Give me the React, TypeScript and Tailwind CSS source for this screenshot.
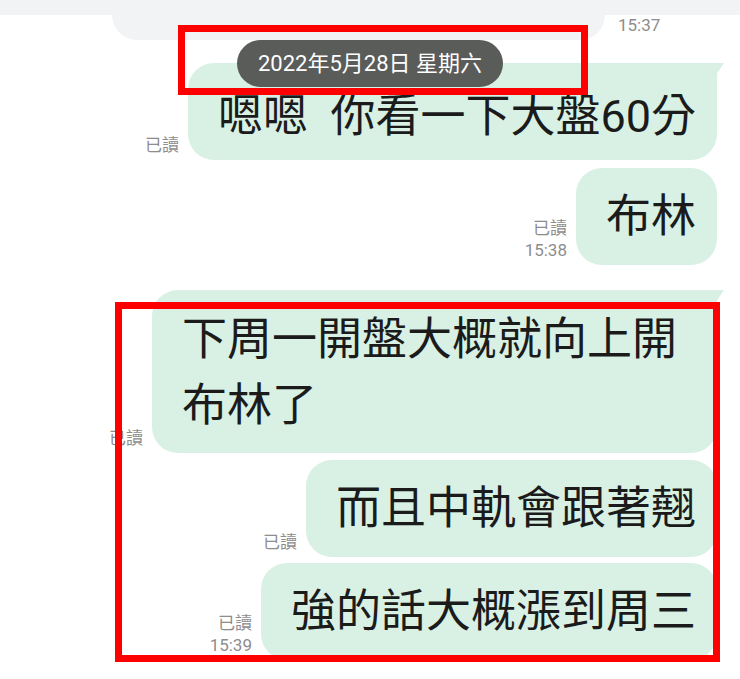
import type { ReactNode } from "react";

const FONT = "font-['Roboto','Noto_Sans_CJK_TC',sans-serif]";

function Tail() {
  return (
    <svg viewBox="0 0 8 12" className="absolute -right-[7px] top-0 w-[8px] h-[12px]">
      <path d="M0 0H8L0 12Z" fill="#d8f1e4" />
    </svg>
  );
}

function Meta({ time }: { time?: string }) {
  return (
    <div className="flex flex-col items-end pb-[4px] text-[17px] leading-[22px] text-[#8d8d8d]">
      <span>已讀</span>
      {time && <span>{time}</span>}
    </div>
  );
}

function Sent({
  children,
  time,
  tail,
  className,
}: {
  children: ReactNode;
  time?: string;
  tail?: boolean;
  className: string;
}) {
  return (
    <div className={`flex justify-end items-end gap-[9px] pr-[23px] ${className}`}>
      <Meta time={time} />
      <div
        className={`relative max-w-[565px] bg-[#d8f1e4] pl-[30px] pr-[21px] text-[45px] leading-[66px] text-[#1b1b1b] whitespace-pre-wrap rounded-[26px] ${
          tail ? "rounded-tr-none" : ""
        }`}
      >
        {tail && <Tail />}
        {children}
      </div>
    </div>
  );
}

export default function App() {
  return (
    <div className={`relative w-[740px] h-[679px] overflow-hidden bg-white ${FONT}`}>
      <div className="h-[15px] bg-[#f2f3f5]" />
      <div className="flex items-start h-[25px]">
        <div className="ml-[112px] w-[493px] h-[25px] bg-[#f2f3f5] rounded-b-[26px]" />
        <span className="ml-[13px] -mt-[1px] text-[17px] leading-[22px] text-[#8d8d8d]">15:37</span>
      </div>

      <Sent tail className="mt-[23px]">
        <div className="pt-[21px] pb-[10px]">{"嗯嗯  你看一下大盤60分"}</div>
      </Sent>
      <Sent time="15:38" className="mt-[8px]">
        <div className="pt-[16px] pb-[15px]">布林</div>
      </Sent>
      <Sent tail className="mt-[25px]">
        <div className="pt-[17px] pb-[14px]">下周一開盤大概就向上開布林了</div>
      </Sent>
      <Sent className="mt-[7px]">
        <div className="pt-[16px] pb-[15px]">而且中軌會跟著翹</div>
      </Sent>
      <Sent time="15:39" className="mt-[6px]">
        <div className="pt-[16px] pb-[15px]">強的話大概漲到周三</div>
      </Sent>

      <div className="absolute left-[237px] top-[40px] w-[266px] h-[47px] rounded-full bg-[#5a5c5a] flex items-center justify-center text-[22px] text-white">
        2022年5月28日 星期六
      </div>

      <div className="absolute left-[178px] top-[25px] w-[410px] h-[70px] border-[7px] border-[#fe0000]" />
      <div className="absolute left-[115px] top-[302px] w-[605px] h-[360px] border-[7px] border-[#fe0000]" />
    </div>
  );
}
